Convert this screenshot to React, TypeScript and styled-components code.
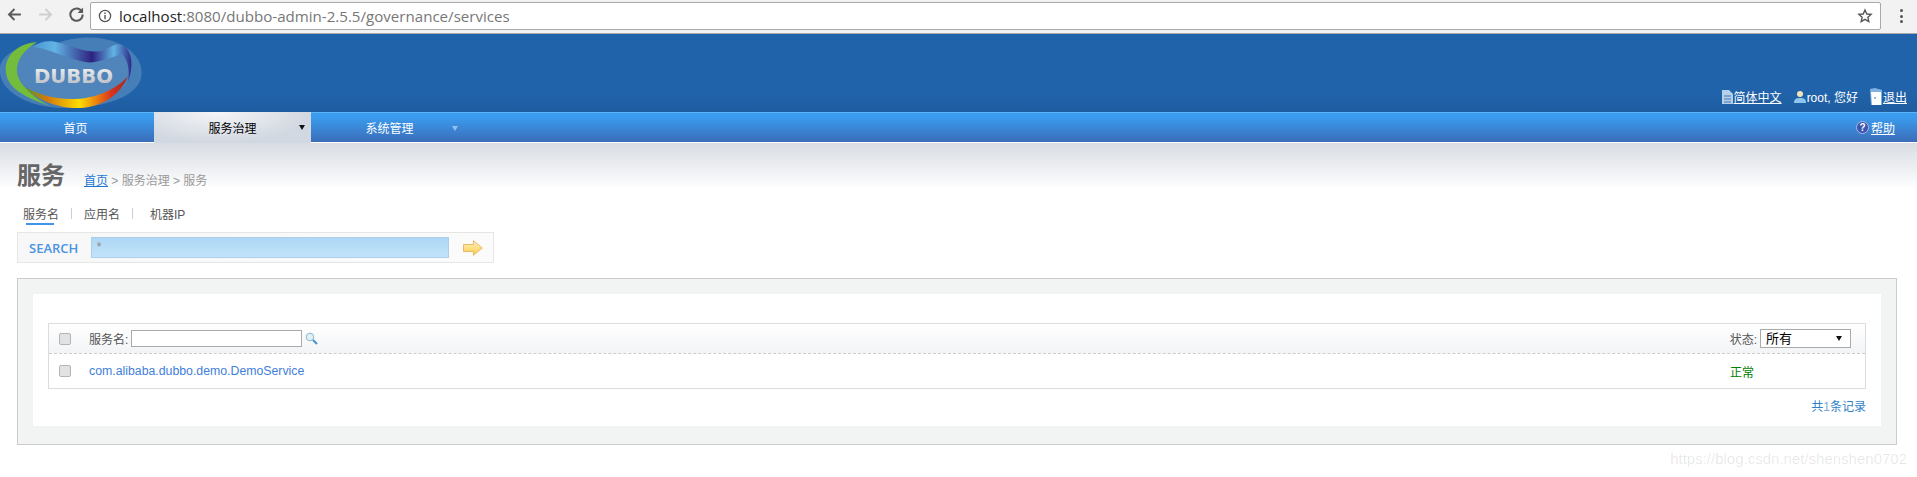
import styled, { createGlobalStyle } from "styled-components";

const GlobalStyle = createGlobalStyle`
  html, body {
    margin: 0;
    padding: 0;
    background: #fff;
    height: 477px;
    overflow: hidden;
  }
  * {
    box-sizing: border-box;
  }
  body {
    font-family: "Liberation Sans", "Noto Sans CJK SC", sans-serif;
    font-size: 12px;
    color: #555;
  }
`;

export default function App() {
  return (
    <Page>
      <GlobalStyle />
      <BrowserBar>
        <NavIcon viewBox="0 0 16 16">
          <path d="M14 8H3M8 2.8 2.8 8 8 13.2" stroke="#5a5a5a" strokeWidth="1.8" fill="none" />
        </NavIcon>
        <NavIcon viewBox="0 0 16 16">
          <path d="M2 8h11M8 2.8 13.2 8 8 13.2" stroke="#cfcfcf" strokeWidth="1.8" fill="none" />
        </NavIcon>
        <NavIcon viewBox="0 0 16 16">
          <path d="M13 5.2A5.8 5.8 0 1 0 13.8 8" stroke="#5a5a5a" strokeWidth="1.9" fill="none" />
          <path d="M14.2 1.4v5.2H9z" fill="#5a5a5a" />
        </NavIcon>
        <AddressBox>
          <InfoIcon viewBox="0 0 14 14">
            <circle cx="7" cy="7" r="5.6" stroke="#555" strokeWidth="1.3" fill="none" />
            <path d="M7 6v4.2M7 3.6v1.3" stroke="#555" strokeWidth="1.4" />
          </InfoIcon>
          <UrlHost>localhost</UrlHost>
          <UrlRest>:8080/dubbo-admin-2.5.5/governance/services</UrlRest>
          <StarIcon viewBox="0 0 16 16">
            <path
              d="M8 2l1.8 4 4.3.4-3.2 2.9.9 4.3L8 11.4l-3.8 2.2.9-4.3L1.9 6.4 6.2 6z"
              stroke="#555"
              strokeWidth="1.4"
              fill="none"
            />
          </StarIcon>
        </AddressBox>
        <MenuDots>
          <i />
          <i />
          <i />
        </MenuDots>
      </BrowserBar>

      <Header>
        <Logo viewBox="0 0 144 78">
          <defs>
            <linearGradient id="ring" x1="0" y1="0" x2="1" y2="0">
              <stop offset="0" stopColor="#3f9c3a" />
              <stop offset="0.25" stopColor="#d2780c" />
              <stop offset="0.55" stopColor="#ffdc00" />
              <stop offset="0.85" stopColor="#d8321c" />
              <stop offset="1" stopColor="#a02a28" />
            </linearGradient>
            <linearGradient id="band" x1="0" y1="0" x2="1" y2="0">
              <stop offset="0" stopColor="#4a96d2" />
              <stop offset="0.22" stopColor="#62b4e4" />
              <stop offset="0.6" stopColor="#2c2280" />
              <stop offset="0.82" stopColor="#62b4e4" />
              <stop offset="1" stopColor="#2c2a88" />
            </linearGradient>
            <linearGradient id="word" x1="0" y1="0" x2="0" y2="1">
              <stop offset="0" stopColor="#f6f6f6" />
              <stop offset="1" stopColor="#b4b8c0" />
            </linearGradient>
          </defs>
          <path
            d="M0 33C3 17 26 8 58 9 72 3 100 0 120 10c16 8 24 20 21 34-4 18-36 30-74 30C25 74-3 55 0 33z"
            fill="#6c99c6"
            fillOpacity="0.5"
          />
          <path
            d="M17 38C16 24 26 12 40 10c22 4 50 14 82 10 8 8 9 22 3 32-14 12-34 14-54 14-30 0-52-12-54-28z"
            fill="#4f85ba"
          />
          <path
            d="M20 50C35 66 60 75 80 74c25-1 42-16 48-32-8 10-28 22-52 23-21 1-41-5-56-15z"
            fill="url(#ring)"
          />
          <path
            d="M37 8C15 10 4 24 6 38c1 14 14 24 44 34C35 65 18 50 17 38 16 26 24 16 37 8z"
            fill="#74bc3c"
          />
          <path
            d="M33 13c7-6 17-7 27-4 15 4 30 12 45 7 7-4 13-8 19-4 8 6 10 20 4 36 2-12 0-22-6-28-12 4-27 10-37 8C65 24 48 14 33 13z"
            fill="url(#band)"
          />
          <LogoWord x="34" y="49" fill="url(#word)" textLength="79" lengthAdjust="spacingAndGlyphs">
            DUBBO
          </LogoWord>
        </Logo>
        <UserLinks>
          <UserLink>
            <svg width="11" height="14" viewBox="0 0 11 14">
              <path d="M0 0h7l4 4v10H0z" fill="#b6d0ea" />
              <path d="M2 6h7M2 9h7M2 12h7" stroke="#3f78b2" />
            </svg>
            <a>简体中文</a>
          </UserLink>
          <UserLink>
            <svg width="12" height="13" viewBox="0 0 12 13">
              <circle cx="6" cy="4" r="3" fill="#f0e4b8" />
              <path d="M0 13c0-4 2-5 6-5s6 1 6 5z" fill="#8cc6ec" />
            </svg>
            <span>root, 您好</span>
          </UserLink>
          <UserLink>
            <svg width="12" height="17" viewBox="0 0 12 17">
              <path d="M0 1l5-1 7 2v15H1z" fill="#7fb2e0" />
              <path d="M1 4h10v13H2z" fill="#fff" />
              <circle cx="5" cy="10" r="0.8" fill="#2063aa" />
            </svg>
            <a>退出</a>
          </UserLink>
        </UserLinks>
      </Header>

      <NavBar>
        <NavItem>首页</NavItem>
        <NavItem $active>
          服务治理
          <Caret $active />
        </NavItem>
        <NavItem>
          系统管理
          <Caret />
        </NavItem>
        <HelpLink>
          <svg width="13" height="13" viewBox="0 0 13 13">
            <circle cx="6.5" cy="6.5" r="6" fill="#3c55ae" stroke="#a9b8e0" />
            <HelpMark x="6.5" y="10" textAnchor="middle">
              ?
            </HelpMark>
          </svg>
          <a>帮助</a>
        </HelpLink>
      </NavBar>

      <Content>
        <TitleRow>
          <PageTitle>服务</PageTitle>
          <Crumbs>
            <a>首页</a> &gt; 服务治理 &gt; 服务
          </Crumbs>
        </TitleRow>

        <SearchTabs>
          <SearchTab $active>服务名</SearchTab>
          <TabDivider />
          <SearchTab>应用名</SearchTab>
          <TabDivider />
          <SearchTab $wide>机器IP</SearchTab>
        </SearchTabs>

        <SearchBox>
          <SearchLabel>SEARCH</SearchLabel>
          <SearchField>*</SearchField>
          <svg width="20" height="16" viewBox="0 0 20 16">
            <defs>
              <linearGradient id="go" x1="0" y1="0" x2="0" y2="1">
                <stop offset="0" stopColor="#fff3b8" />
                <stop offset="1" stopColor="#fdc94e" />
              </linearGradient>
            </defs>
            <path
              d="M.5 4.5h10V.7L19.3 8l-8.8 7.3v-3.8H.5z"
              fill="url(#go)"
              stroke="#e6b968"
            />
          </svg>
        </SearchBox>

        <Panel>
          <PanelInner>
            <DataTable>
              <TableHead>
                <Check />
                <FilterLabel>服务名:</FilterLabel>
                <FilterInput />
                <svg width="13" height="13" viewBox="0 0 13 13">
                  <circle cx="5" cy="5" r="3.8" fill="#dff1f7" stroke="#8fb9c6" />
                  <path d="M8 8l4 4" stroke="#3f93d0" strokeWidth="2" />
                </svg>
                <StatusFilter>
                  状态:
                  <StatusSelect>
                    所有
                    <SelectCaret />
                  </StatusSelect>
                </StatusFilter>
              </TableHead>
              <TableRow>
                <Check />
                <ServiceLink>com.alibaba.dubbo.demo.DemoService</ServiceLink>
                <StatusText>正常</StatusText>
              </TableRow>
            </DataTable>
            <RecordCount>
              共<b>1</b>条记录
            </RecordCount>
          </PanelInner>
        </Panel>
      </Content>

      <Watermark>https://blog.csdn.net/shenshen0702</Watermark>
    </Page>
  );
}

const Page = styled.div`
  position: relative;
  width: 1917px;
  height: 477px;
  overflow: hidden;
`;

const BrowserBar = styled.div`
  display: flex;
  align-items: center;
  height: 34px;
  padding: 0 0 4px 6px;
  background: #f2f2f2;
  border-bottom: 1px solid #a9a9a9;
`;

const NavIcon = styled.svg`
  width: 17px;
  height: 17px;
  margin-right: 14px;
  &:nth-of-type(3) {
    margin-right: 5px;
  }
`;

const AddressBox = styled.div`
  display: flex;
  align-items: center;
  width: 1791px;
  height: 28px;
  margin-top: 3px;
  padding: 0 7px;
  background: #fff;
  border: 1px solid #a9a9a9;
  border-radius: 2px;
  font-family: "Open Sans", "Liberation Sans", sans-serif;
  font-size: 15.1px;
`;

const InfoIcon = styled.svg`
  width: 14px;
  height: 14px;
  margin-right: 7px;
`;

const UrlHost = styled.span`
  color: #222;
`;

const UrlRest = styled.span`
  color: #777;
`;

const StarIcon = styled.svg`
  width: 16px;
  height: 16px;
  margin-left: auto;
`;

const MenuDots = styled.div`
  display: flex;
  flex-direction: column;
  gap: 2.5px;
  margin-left: 19px;
  margin-top: 3px;

  i {
    width: 3px;
    height: 3px;
    border-radius: 50%;
    background: #555;
  }
`;

const Header = styled.header`
  display: flex;
  justify-content: space-between;
  height: 78px;
  padding-right: 10px;
  background: linear-gradient(#2063aa 75%, #1f5ca0);
`;

const Logo = styled.svg`
  width: 144px;
  height: 78px;
`;

const LogoWord = styled.text`
  font-family: "DejaVu Sans", sans-serif;
  font-size: 19px;
  font-weight: 700;
`;

const UserLinks = styled.div`
  display: flex;
  align-items: center;
  align-self: flex-end;
  gap: 12px;
  height: 17px;
  margin-bottom: 7px;
`;

const UserLink = styled.div`
  display: flex;
  align-items: center;
  gap: 1px;
  color: #fff;

  a {
    text-decoration: underline;
  }
`;

const NavBar = styled.nav`
  display: flex;
  height: 31px;
  padding-right: 22px;
  background: linear-gradient(#3b9df0 0, #3a9bee 15%, #3b6db8 100%);
  border-top: 1px solid #5cb4f8;
  border-bottom: 1px solid #fff;
`;

const NavItem = styled.div<{ $active?: boolean }>`
  position: relative;
  display: flex;
  align-items: center;
  justify-content: center;
  width: 157px;
  height: ${(p) => (p.$active ? "31px" : "29px")};
  margin-top: ${(p) => (p.$active ? "-1px" : "0")};
  color: ${(p) => (p.$active ? "#000" : "#fff")};
  background: ${(p) =>
    p.$active ? "radial-gradient(ellipse at 40% 0, #f4f5f7, #d2d8e1 70%)" : "none"};

  &:first-child {
    width: 154px;
    padding-right: 3px;
  }
`;

const Caret = styled.span<{ $active?: boolean }>`
  position: absolute;
  right: ${(p) => (p.$active ? "6px" : "10px")};
  top: 13px;
  width: 0;
  height: 0;
  border-left: 3px solid transparent;
  border-right: 3px solid transparent;
  border-top: 5px solid ${(p) => (p.$active ? "#111" : "#8fc0ee")};
`;

const HelpLink = styled.div`
  display: flex;
  align-items: center;
  gap: 2px;
  margin-left: auto;
  height: 29px;
  color: #fff;

  a {
    text-decoration: underline;
  }
`;

const HelpMark = styled.text`
  font-family: "Liberation Sans", sans-serif;
  font-size: 10px;
  font-weight: 700;
  fill: #fff;
`;

const Content = styled.main`
  padding: 16px 20px 0 17px;
  background: linear-gradient(#d8dce3, #fff 46px) no-repeat;
`;

const TitleRow = styled.div`
  display: flex;
  align-items: flex-end;
  height: 33px;
`;

const PageTitle = styled.h1`
  margin: 0;
  font-size: 24px;
  line-height: 33px;
  font-weight: 700;
  color: #666;
`;

const Crumbs = styled.div`
  margin: 0 0 1px 19px;
  color: #999;
  line-height: 20px;

  a {
    color: #1e78d2;
    text-decoration: underline;
  }
`;

const SearchTabs = styled.div`
  display: flex;
  align-items: center;
  height: 22px;
  margin-top: 10px;
  padding-left: 6px;
`;

const SearchTab = styled.span<{ $active?: boolean; $wide?: boolean }>`
  position: relative;
  margin-left: ${(p) => (p.$wide ? "5px" : "0")};
  color: #555;

  ${(p) =>
    p.$active &&
    `&::after {
      content: "";
      position: absolute;
      left: 3px;
      right: 5px;
      bottom: -3px;
      height: 2px;
      background: #3f96e6;
    }`}
`;

const TabDivider = styled.span`
  width: 1px;
  height: 11px;
  margin: 0 12px;
  background: #ccd;
`;

const SearchBox = styled.div`
  display: flex;
  align-items: center;
  width: 477px;
  height: 31px;
  margin-top: 8px;
  padding: 0 10px 0 11px;
  background: linear-gradient(90deg, #f7f7f7, #fbfbfb);
  border: 1px solid #e6e6e6;
`;

const SearchLabel = styled.span`
  width: 62px;
  color: #4a94e6;
  font-family: "Open Sans", sans-serif;
  font-size: 13px;
  font-weight: 600;
`;

const SearchField = styled.div`
  width: 360px;
  height: 21px;
  margin-right: 14px;
  padding: 2px 5px;
  background: linear-gradient(#aed7f4, #c2e3fa);
  border: 1px solid #a8d0ea;
  color: #888;
`;

const Panel = styled.section`
  margin-top: 15px;
  width: 1880px;
  height: 167px;
  padding: 15px;
  background: #f2f4f4;
  border: 1px solid #cccccc;
`;

const PanelInner = styled.div`
  height: 132px;
  padding: 29px 15px 0;
  background: #fff;
`;

const DataTable = styled.div`
  border: 1px solid #dcdcdc;
`;

const TableHead = styled.div`
  display: flex;
  align-items: center;
  height: 30px;
  padding: 0 10px;
  background: linear-gradient(#fff, #f2f4f6);
  border-bottom: 1px dashed #ccc;
`;

const TableRow = styled.div`
  display: flex;
  align-items: center;
  height: 34px;
  padding: 0 10px;
`;

const Check = styled.span`
  width: 12px;
  height: 12px;
  margin-right: 18px;
  background: #e2e2e2;
  border: 1px solid #b4b4b4;
  border-radius: 2px;
`;

const FilterLabel = styled.span`
  margin-right: 3px;
`;

const FilterInput = styled.span`
  width: 171px;
  height: 17px;
  margin-right: 3px;
  background: #fff;
  border: 1px solid #aaa;
`;

const StatusFilter = styled.div`
  display: flex;
  align-items: center;
  gap: 3px;
  margin-left: auto;
  margin-right: 4px;
`;

const StatusSelect = styled.div`
  position: relative;
  width: 91px;
  height: 19px;
  padding-left: 5px;
  font-size: 13px;
  line-height: 17px;
  color: #000;
  background: #fff;
  border: 1px solid #aaa;
`;

const SelectCaret = styled.span`
  position: absolute;
  right: 8px;
  top: 6px;
  width: 0;
  height: 0;
  border-left: 3px solid transparent;
  border-right: 3px solid transparent;
  border-top: 5px solid #111;
`;

const ServiceLink = styled.a`
  color: #3f80dc;
  font-size: 12.3px;
`;

const StatusText = styled.span`
  margin-left: auto;
  margin-right: 101px;
  color: #008000;
`;

const RecordCount = styled.div`
  margin-top: 8px;
  text-align: right;
  color: #2f7fc8;

  b {
    font-weight: 400;
    color: #7fa8d8;
  }
`;

const Watermark = styled.div`
  position: absolute;
  right: 10px;
  top: 450px;
  font-size: 15px;
  color: rgba(0, 0, 0, 0.1);
`;
